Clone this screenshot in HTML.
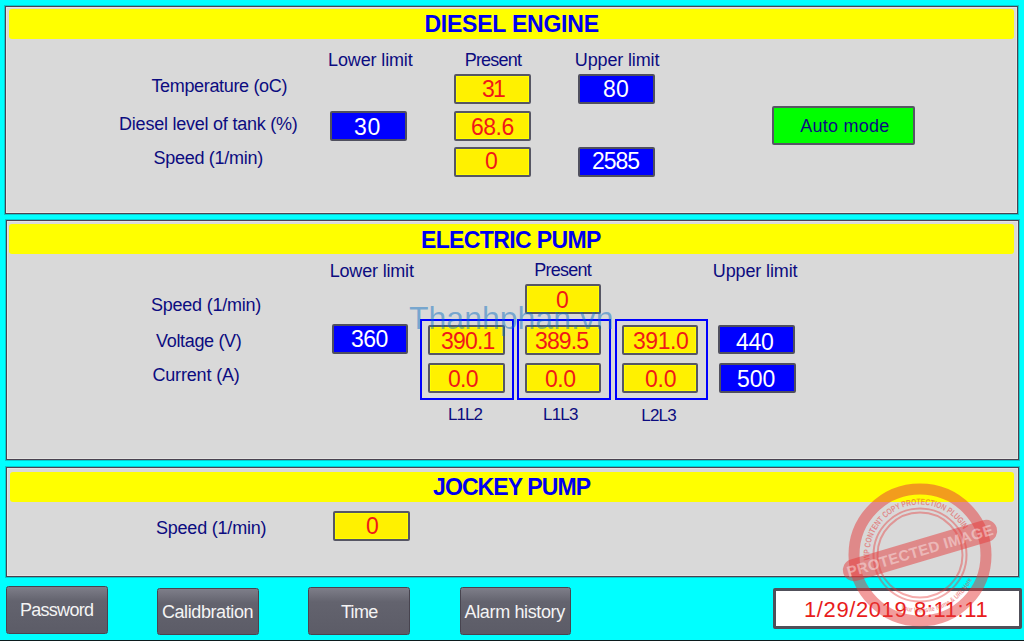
<!DOCTYPE html>
<html><head><meta charset="utf-8"><style>
html,body{margin:0;padding:0;}
body{width:1024px;height:641px;overflow:hidden;position:relative;background:#00ffff;font-family:"Liberation Sans",sans-serif;}
body>div{position:absolute;box-sizing:border-box;}
.panel{background:#d9d9d9;border:1px solid #4a4250;box-shadow:0 0 0 1px rgba(30,40,50,0.25), inset 1px 1px 0 #e4e4e2, inset -1px -1px 0 #e4e4e2;}
.ybar{background:#ffff00;border-radius:3px;}
.yb{background:#fff100;border:2px solid #565664;border-radius:2px;box-shadow:inset 0 0 0 1px #ffff00;}
.bb{background:#0000ff;border:2px solid #50505e;border-radius:2px;}
.green{background:#00ff00;border:2px solid #565664;border-radius:2px;}
.grp{border:2px solid #0000ff;}
.btn{background:linear-gradient(#7e7e89 0px,#63636e 14px,#5c5c67 100%);border:1px solid #48444f;border-radius:2.5px;}
.date{background:#ffffff;border:3px solid #50505a;border-radius:2px;}
.bot{left:0;top:640px;width:1024px;height:1px;background:#0c1c1e;}
</style></head><body>
<div class="panel" style="left:5px;top:6px;width:1013px;height:208px;"></div>
<div class="ybar" style="left:9px;top:9px;width:1005px;height:30px;"></div>
<div class="panel" style="left:6px;top:220px;width:1013px;height:240px;"></div>
<div class="ybar" style="left:9px;top:224px;width:1005px;height:30px;"></div>
<div class="panel" style="left:6px;top:467px;width:1013px;height:110px;"></div>
<div class="ybar" style="left:10px;top:472px;width:1004px;height:30px;"></div>
<div class="yb" style="left:454px;top:74px;width:77px;height:30px;"></div>
<div class="bb" style="left:578px;top:74px;width:77px;height:30px;"></div>
<div class="bb" style="left:330px;top:111px;width:77px;height:30px;"></div>
<div class="yb" style="left:454px;top:111px;width:77px;height:30px;"></div>
<div class="yb" style="left:454px;top:147px;width:77px;height:30px;"></div>
<div class="bb" style="left:578px;top:147px;width:77px;height:30px;"></div>
<div class="green" style="left:772px;top:106px;width:143px;height:39px;"></div>
<div class="yb" style="left:525px;top:284px;width:76px;height:30px;"></div>
<div class="bb" style="left:332px;top:324px;width:76px;height:30px;"></div>
<div class="grp" style="left:420px;top:319px;width:94px;height:81px;"></div>
<div class="grp" style="left:517px;top:319px;width:94px;height:81px;"></div>
<div class="grp" style="left:615px;top:319px;width:93px;height:81px;"></div>
<div class="yb" style="left:428px;top:325px;width:77px;height:30px;"></div>
<div class="yb" style="left:428px;top:363px;width:77px;height:30px;"></div>
<div class="yb" style="left:525px;top:325px;width:76px;height:30px;"></div>
<div class="yb" style="left:525px;top:363px;width:76px;height:30px;"></div>
<div class="yb" style="left:622px;top:325px;width:76px;height:30px;"></div>
<div class="yb" style="left:622px;top:363px;width:76px;height:30px;"></div>
<div class="bb" style="left:718px;top:325px;width:77px;height:29px;"></div>
<div class="bb" style="left:719px;top:363px;width:77px;height:30px;"></div>
<div class="yb" style="left:333px;top:511px;width:77px;height:30px;"></div>
<div class="btn" style="left:6px;top:586px;width:102px;height:48px;"></div>
<div class="btn" style="left:157px;top:588px;width:102px;height:47px;"></div>
<div class="btn" style="left:308px;top:587px;width:102px;height:48px;"></div>
<div class="btn" style="left:460px;top:587px;width:111px;height:48px;"></div>
<div class="date" style="left:773px;top:588px;width:249px;height:41px;"></div>
<div style="position:absolute;top:50.76px;font-size:18px;line-height:18px;color:#0c0c80;font-weight:normal;white-space:nowrap;left:328.10px;letter-spacing:-0.140px;">Lower limit</div>
<div style="position:absolute;top:50.96px;font-size:18px;line-height:18px;color:#0c0c80;font-weight:normal;white-space:nowrap;left:464.70px;letter-spacing:-0.800px;">Present</div>
<div style="position:absolute;top:50.96px;font-size:18px;line-height:18px;color:#0c0c80;font-weight:normal;white-space:nowrap;left:574.80px;letter-spacing:-0.140px;">Upper limit</div>
<div style="position:absolute;top:77.16px;font-size:18px;line-height:18px;color:#0c0c80;font-weight:normal;white-space:nowrap;left:151.40px;letter-spacing:-0.333px;">Temperature (oC)</div>
<div style="position:absolute;top:115.26px;font-size:18px;line-height:18px;color:#0c0c80;font-weight:normal;white-space:nowrap;left:119.10px;letter-spacing:-0.235px;">Diesel level of tank (%)</div>
<div style="position:absolute;top:148.96px;font-size:18px;line-height:18px;color:#0c0c80;font-weight:normal;white-space:nowrap;left:153.50px;letter-spacing:-0.283px;">Speed (1/min)</div>
<div style="position:absolute;top:261.76px;font-size:18px;line-height:18px;color:#0c0c80;font-weight:normal;white-space:nowrap;left:329.70px;letter-spacing:-0.180px;">Lower limit</div>
<div style="position:absolute;top:261.06px;font-size:18px;line-height:18px;color:#0c0c80;font-weight:normal;white-space:nowrap;left:534.20px;letter-spacing:-0.733px;">Present</div>
<div style="position:absolute;top:261.56px;font-size:18px;line-height:18px;color:#0c0c80;font-weight:normal;white-space:nowrap;left:712.80px;letter-spacing:-0.120px;">Upper limit</div>
<div style="position:absolute;top:296.06px;font-size:18px;line-height:18px;color:#0c0c80;font-weight:normal;white-space:nowrap;left:150.90px;letter-spacing:-0.217px;">Speed (1/min)</div>
<div style="position:absolute;top:332.06px;font-size:18px;line-height:18px;color:#0c0c80;font-weight:normal;white-space:nowrap;left:156.10px;letter-spacing:-0.340px;">Voltage (V)</div>
<div style="position:absolute;top:365.76px;font-size:18px;line-height:18px;color:#0c0c80;font-weight:normal;white-space:nowrap;left:152.40px;letter-spacing:-0.160px;">Current (A)</div>
<div style="position:absolute;top:406.41px;font-size:17px;line-height:17px;color:#0c0c80;font-weight:normal;white-space:nowrap;left:448.10px;letter-spacing:-1.000px;">L1L2</div>
<div style="position:absolute;top:406.41px;font-size:17px;line-height:17px;color:#0c0c80;font-weight:normal;white-space:nowrap;left:543.00px;letter-spacing:-0.800px;">L1L3</div>
<div style="position:absolute;top:406.61px;font-size:17px;line-height:17px;color:#0c0c80;font-weight:normal;white-space:nowrap;left:641.30px;letter-spacing:-0.800px;">L2L3</div>
<div style="position:absolute;top:519.16px;font-size:18px;line-height:18px;color:#0c0c80;font-weight:normal;white-space:nowrap;left:155.90px;letter-spacing:-0.200px;">Speed (1/min)</div>
<div style="position:absolute;top:116.66px;font-size:18px;line-height:18px;color:#0c0c80;font-weight:normal;white-space:nowrap;left:800.20px;letter-spacing:0.250px;">Auto mode</div>
<div style="position:absolute;top:600.96px;font-size:18px;line-height:18px;color:#f4f4f4;font-weight:normal;white-space:nowrap;left:19.95px;letter-spacing:-0.714px;">Password</div>
<div style="position:absolute;top:603.06px;font-size:18px;line-height:18px;color:#f4f4f4;font-weight:normal;white-space:nowrap;left:161.90px;letter-spacing:-0.400px;">Calidbration</div>
<div style="position:absolute;top:602.86px;font-size:18px;line-height:18px;color:#f4f4f4;font-weight:normal;white-space:nowrap;left:340.90px;letter-spacing:-0.667px;">Time</div>
<div style="position:absolute;top:602.86px;font-size:18px;line-height:18px;color:#f4f4f4;font-weight:normal;white-space:nowrap;left:464.60px;letter-spacing:-0.367px;">Alarm history</div>
<div style="position:absolute;top:78.03px;font-size:23px;line-height:23px;color:#f01818;font-weight:normal;white-space:nowrap;left:482.00px;letter-spacing:-1.700px;">31</div>
<div style="position:absolute;top:78.03px;font-size:23px;line-height:23px;color:#ffffff;font-weight:normal;white-space:nowrap;left:603.00px;letter-spacing:0.100px;">80</div>
<div style="position:absolute;top:115.83px;font-size:23px;line-height:23px;color:#ffffff;font-weight:normal;white-space:nowrap;left:354.00px;letter-spacing:0.600px;">30</div>
<div style="position:absolute;top:116.03px;font-size:23px;line-height:23px;color:#f01818;font-weight:normal;white-space:nowrap;left:471.00px;letter-spacing:-0.500px;">68.6</div>
<div style="position:absolute;top:150.43px;font-size:23px;line-height:23px;color:#f01818;font-weight:normal;white-space:nowrap;left:485.00px;letter-spacing:0.000px;">0</div>
<div style="position:absolute;top:150.03px;font-size:23px;line-height:23px;color:#ffffff;font-weight:normal;white-space:nowrap;left:592.00px;letter-spacing:-1.033px;">2585</div>
<div style="position:absolute;top:289.33px;font-size:23px;line-height:23px;color:#f01818;font-weight:normal;white-space:nowrap;left:556.00px;letter-spacing:0.000px;">0</div>
<div style="position:absolute;top:328.03px;font-size:23px;line-height:23px;color:#ffffff;font-weight:normal;white-space:nowrap;left:351.00px;letter-spacing:-0.550px;">360</div>
<div style="position:absolute;top:329.53px;font-size:23px;line-height:23px;color:#f01818;font-weight:normal;white-space:nowrap;left:441.00px;letter-spacing:-0.825px;">390.1</div>
<div style="position:absolute;top:329.53px;font-size:23px;line-height:23px;color:#f01818;font-weight:normal;white-space:nowrap;left:535.00px;letter-spacing:-0.875px;">389.5</div>
<div style="position:absolute;top:329.53px;font-size:23px;line-height:23px;color:#f01818;font-weight:normal;white-space:nowrap;left:633.00px;letter-spacing:-0.425px;">391.0</div>
<div style="position:absolute;top:367.83px;font-size:23px;line-height:23px;color:#f01818;font-weight:normal;white-space:nowrap;left:448.00px;letter-spacing:-0.700px;">0.0</div>
<div style="position:absolute;top:367.83px;font-size:23px;line-height:23px;color:#f01818;font-weight:normal;white-space:nowrap;left:545.00px;letter-spacing:-0.500px;">0.0</div>
<div style="position:absolute;top:367.83px;font-size:23px;line-height:23px;color:#f01818;font-weight:normal;white-space:nowrap;left:645.00px;letter-spacing:-0.250px;">0.0</div>
<div style="position:absolute;top:330.53px;font-size:23px;line-height:23px;color:#ffffff;font-weight:normal;white-space:nowrap;left:736.00px;letter-spacing:-0.250px;">440</div>
<div style="position:absolute;top:368.03px;font-size:23px;line-height:23px;color:#ffffff;font-weight:normal;white-space:nowrap;left:737.00px;letter-spacing:0.000px;">500</div>
<div style="position:absolute;top:515.23px;font-size:23px;line-height:23px;color:#f01818;font-weight:normal;white-space:nowrap;left:366.00px;letter-spacing:0.000px;">0</div>
<div style="position:absolute;top:598.58px;font-size:22px;line-height:22px;color:#e81c1c;font-weight:normal;white-space:nowrap;left:804.00px;letter-spacing:0.600px;">1/29/2019 8:11:11</div>
<div style="position:absolute;top:12.93px;font-size:23px;line-height:23px;color:#0000f0;font-weight:bold;white-space:nowrap;left:424.40px;letter-spacing:-0.217px;">DIESEL ENGINE</div>
<div style="position:absolute;top:228.93px;font-size:23px;line-height:23px;color:#0000f0;font-weight:bold;white-space:nowrap;left:421.00px;letter-spacing:-0.633px;">ELECTRIC PUMP</div>
<div style="position:absolute;top:476.23px;font-size:23px;line-height:23px;color:#0000f0;font-weight:bold;white-space:nowrap;left:433.00px;letter-spacing:-0.900px;">JOCKEY PUMP</div>
<div style="position:absolute;top:302.11px;font-size:32px;line-height:32px;color:rgba(10,110,195,0.47);font-weight:normal;white-space:nowrap;left:409.00px;">Thanhphan.vn</div>
<svg style="position:absolute;left:830px;top:465px;" width="190" height="176" viewBox="830 465 190 176">
<defs>
<path id="arcTop" d="M 869.78,560.28 A 50.5,50.5 0 0 1 963.73,529.75"/>
<path id="arcBot" d="M 900.3,609.0 A 57.5,57.5 0 0 0 972.1,579.3"/>
</defs>
<g fill="none" stroke="#e63a3a">
<circle cx="920" cy="555" r="66" stroke-width="11" opacity="0.5"/>
<circle cx="920" cy="555" r="46.5" stroke-width="2" opacity="0.42"/>
<circle cx="920" cy="555" r="42.5" stroke-width="2" opacity="0.42"/>
</g>
<g opacity="0.5" fill="#e63a3a" font-family="Liberation Sans" font-weight="bold">
<text font-size="8.5"><textPath href="#arcTop" textLength="137" lengthAdjust="spacingAndGlyphs">WP CONTENT COPY PROTECTION PLUGIN</textPath></text>
<text font-size="7"><textPath href="#arcBot" textLength="85" lengthAdjust="spacingAndGlyphs">Your Website Name &amp; URL Here</textPath></text>
</g>
<g transform="rotate(-16.5 920 550.5)">
<rect x="840" y="539.5" width="160" height="22" rx="11" fill="#e63a3a" opacity="0.5"/>
<text x="920" y="556" text-anchor="middle" font-family="Liberation Sans" font-weight="bold" font-size="15" fill="#ffffff" opacity="0.4" letter-spacing="0.4">PROTECTED IMAGE</text>
</g>
</svg>
<div class="bot"></div>
</body></html>
